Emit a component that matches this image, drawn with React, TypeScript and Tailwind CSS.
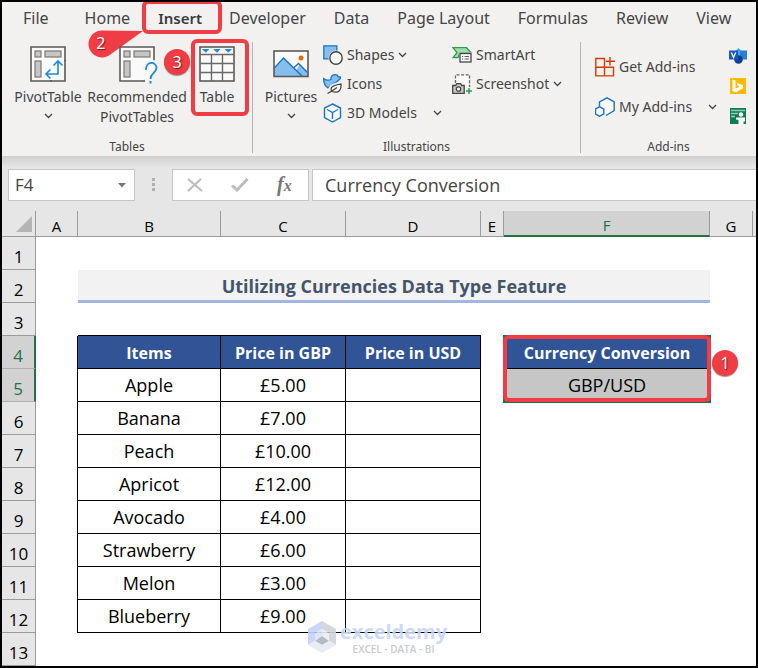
import type { ReactNode } from 'react'
import { clsx } from 'clsx'

const TABS = ['File', 'Home', 'Insert', 'Developer', 'Data', 'Page Layout', 'Formulas', 'Review', 'View']

const COLUMNS = ['A', 'B', 'C', 'D', 'E', 'F', 'G']

const ITEMS = [
  { name: 'Apple', gbp: '£5.00' },
  { name: 'Banana', gbp: '£7.00' },
  { name: 'Peach', gbp: '£10.00' },
  { name: 'Apricot', gbp: '£12.00' },
  { name: 'Avocado', gbp: '£4.00' },
  { name: 'Strawberry', gbp: '£6.00' },
  { name: 'Melon', gbp: '£3.00' },
  { name: 'Blueberry', gbp: '£9.00' },
]

function Chevron() {
  return (
    <svg width="9" height="6" viewBox="0 0 9 6" fill="none" stroke="#444" strokeWidth="1.3" className="shrink-0">
      <path d="M1 1l3.500 3.500L8 1" />
    </svg>
  )
}

function PivotFrame() {
  return (
    <>
      <rect x="1" y="1" width="34" height="34" fill="#fafafa" />
      <path d="M22 35H1V1h34v14" fill="none" stroke="#5c5a58" strokeWidth="1.6" />
      <g fill="#c8c6c4" stroke="#7a7876" strokeWidth="1.2">
        <rect x="5" y="5" width="6" height="6" />
        <rect x="15" y="5" width="16" height="6" />
        <rect x="5" y="15" width="6" height="16" />
      </g>
    </>
  )
}

function PivotTableIcon() {
  return (
    <svg width="36" height="36" viewBox="0 0 36 36">
      <PivotFrame />
      <path d="M20 35h15V14" fill="none" stroke="#5c5a58" strokeWidth="1.6" />
      <path d="M16.500 28H28V15.500M20.500 23.500L16 28l4.500 4.500M23.500 19.500L28 15l4.500 4.500" fill="none" stroke="#1e8bd8" strokeWidth="1.6" />
    </svg>
  )
}

function RecommendedIcon() {
  return (
    <svg width="40" height="38" viewBox="0 0 40 38">
      <PivotFrame />
      <path d="M22 35h4" stroke="#5c5a58" strokeWidth="1.6" />
      <path
        d="M27 24.500c-.3-10.500 11-9 11-2.500 0 5-6.500 5-6.500 16"
        fill="none"
        stroke="#f3f1f0"
        strokeWidth="6"
      />
      <path d="M27 24c-.3-9.500 10.500-8.500 10.500-2.200 0 5-6 5.200-6 11.200" fill="none" stroke="#1e8bd8" strokeWidth="1.8" />
      <rect x="30.500" y="35" width="2" height="2.500" fill="#1e8bd8" />
    </svg>
  )
}

function TableIcon() {
  return (
    <svg width="36" height="36" viewBox="0 0 36 36">
      <rect x="1" y="1" width="34" height="34" fill="#fafafa" stroke="#5c5a58" strokeWidth="1.6" />
      <path d="M1 8.500h34M1 17.500h34M1 26.500h34M12.500 8.500V35M23.500 8.500V35" stroke="#6b6967" strokeWidth="1.4" fill="none" />
      <path d="M3 3h7.500L6.800 6.800zM14.200 3h7.500L18 6.800zM25.500 3H33l-3.700 3.800z" fill="#1e8bd8" />
    </svg>
  )
}

function PicturesIcon() {
  return (
    <svg width="36" height="36" viewBox="0 0 36 36">
      <rect x="1" y="5" width="34" height="25.500" fill="#fafafa" />
      <path d="M1 23.500l10-11 12 12 3.500-5.500 8.500 9v2.500H1z" fill="#83beec" />
      <path d="M1 22.500l9.500-10.500L29 30M20.500 22l5-4.500L35 27" fill="none" stroke="#1a74c4" strokeWidth="1.5" />
      <rect x="1" y="5" width="34" height="25.500" fill="none" stroke="#5c5a58" strokeWidth="1.6" />
      <circle cx="28" cy="12" r="2.500" fill="#e07000" />
    </svg>
  )
}

function ShapesIcon() {
  return (
    <svg width="20" height="20" viewBox="0 0 20 20">
      <path d="M.8 .8h13v13h-13z" fill="#83beec" stroke="#1a74c4" strokeWidth="1.3" />
      <circle cx="13" cy="13" r="7.500" fill="#f3f1f0" />
      <circle cx="13" cy="13" r="6.200" fill="#fafafa" stroke="#444" strokeWidth="1.4" />
    </svg>
  )
}

function IconsIcon() {
  return (
    <svg width="20" height="20" viewBox="0 0 20 20">
      <path
        d="M.7 4.500c2.300 2 5 2 7.300 1C7.500 2 10 .7 12 .7c2 0 3 1 3.300 2l2.200.3c0 2-1 3-2.500 3.500-.5 1.500-2 2.500-4.500 3L5 14C2 12 .5 9 .7 4.500z"
        fill="#83beec"
        stroke="#1a74c4"
        strokeWidth="1.3"
      />
      <path d="M18.500 9.500c.5 6-2 9.500-6.500 9.200-3.500-.2-5.500-2-4.500-4.700 1.200-3.200 6-4 11-4.500z" fill="#fafafa" stroke="#f3f1f0" strokeWidth="3.5" />
      <path
        d="M18 10c.5 5.500-2 8.500-6 8.200-3-.2-4.500-2-3.700-4.200C9.500 11 14 10.500 18 10zM4.500 19.500c3-1.500 6-3.500 9.500-6"
        fill="#fafafa"
        stroke="#444"
        strokeWidth="1.3"
      />
    </svg>
  )
}

function CubeIcon() {
  return (
    <svg width="20" height="20" viewBox="0 0 20 20" fill="none" stroke="#1a74c4" strokeWidth="1.4">
      <path d="M9.500 1l8 4v9.500l-8 4.500-8-4.500V5z" fill="#fafafa" />
      <path d="M4 6.500l5.500 3 5.500-3M9.500 9.500v6.500" />
    </svg>
  )
}

function SmartArtIcon() {
  return (
    <svg width="20" height="20" viewBox="0 0 20 20">
      <path d="M1 2.700h13.500l4.500 5H8l-2 5H1l4-5z" fill="#a3dcae" stroke="#2f9a4b" strokeWidth="1.3" />
      <rect x="7" y="7.500" width="13" height="10.500" fill="#f3f1f0" />
      <rect x="8" y="8.500" width="11" height="8.500" fill="#fafafa" stroke="#444" strokeWidth="1.3" />
      <path d="M10 11.500h1.200M12.500 11.500H17M10 14h1.200M12.500 14H17" stroke="#666" />
    </svg>
  )
}

function ScreenshotIcon() {
  return (
    <svg width="20" height="20" viewBox="0 0 20 20">
      <path d="M3.500 9V.8h14V13" fill="#fafafa" stroke="#666" strokeWidth="1.3" strokeDasharray="3 1.600" />
      <path d="M.7 11.500h3l1-1.800h4l1 1.800h2.500v7.800H.7z" fill="#c8c6c4" stroke="#444" strokeWidth="1.3" />
      <circle cx="6.500" cy="15" r="2.200" fill="#fafafa" stroke="#444" strokeWidth="1.3" />
      <path d="M17 14v6M14 17h6" stroke="#2f9a4b" strokeWidth="1.5" />
    </svg>
  )
}

function GetAddinsIcon() {
  return (
    <svg width="20" height="20" viewBox="0 0 20 20" fill="none" stroke="#d83b01" strokeWidth="1.4">
      <path d="M.8 1.500h8.700v8.700H.8zM.8 10.200h8.700v8.700H.8zM9.500 10.200h9v8.700h-9zM15 0v8.500M10.800 4.200H20" />
    </svg>
  )
}

function MyAddinsIcon() {
  return (
    <svg width="20" height="20" viewBox="0 0 20 20" stroke="#1a74c4" strokeWidth="1.4">
      <path d="M4.500 9.500V4.800L12 .8l7.200 4v8.700L11 18.500" fill="#fafafa" />
      <path d="M4.500 9.700l4.300 2.400v4.800l-4.300 2.400-4-2.400v-4.800z" fill="#fafafa" />
    </svg>
  )
}

function VisioIcon() {
  return (
    <svg width="18" height="16" viewBox="0 0 18 16">
      <path d="M9.500 0L14 4.500 9.500 9 5 4.500z" fill="#41a5ee" />
      <rect x="11" y="2.500" width="7" height="9" fill="#2b7cd3" />
      <circle cx="9.500" cy="11.500" r="4.300" fill="#103f91" />
      <rect x="0" y="2.500" width="9" height="9" fill="#185abd" />
      <path d="M2.300 4.500l2.200 5 2.200-5" fill="none" stroke="#fff" strokeWidth="1.3" />
    </svg>
  )
}

function BingIcon() {
  return (
    <svg width="16" height="16" viewBox="0 0 16 16">
      <rect width="16" height="16" fill="#ffb900" />
      <path d="M2.500 1.500l3 1v8.200l4-2.200-2-1-1-2.700 6.500 2.400v3L5.500 14.500l-3-1.700z" fill="#fff" />
    </svg>
  )
}

function PeopleIcon() {
  return (
    <svg width="16" height="16" viewBox="0 0 16 16">
      <rect width="16" height="16" fill="#107c54" />
      <path d="M1 2.500h14M1 5.500h7M1 8.500h4" stroke="#8fd0b0" strokeWidth="1.3" />
      <circle cx="11" cy="6.500" r="2.200" fill="#fff" />
      <path d="M6 9.500h9v4h-1.500V16h-5v-4L6 11.500z" fill="#fff" />
    </svg>
  )
}

function Badge({ label, className }: { label: string; className?: string }) {
  return (
    <span
      className={clsx(
        'absolute z-10 flex size-[26px] items-center justify-center rounded-full bg-[#f03c44] text-base font-normal text-white shadow-[0_1px_1px_#00000066] [text-shadow:1px_1px_1px_#00000088]',
        className,
      )}
    >
      {label}
    </span>
  )
}

function BigButton({ icon, label, chevron, className, children }: {
  icon: ReactNode
  label: string
  chevron?: boolean
  className?: string
  children?: ReactNode
}) {
  return (
    <button type="button" className={clsx('relative flex flex-col items-center leading-5', className)}>
      <span className="mb-1 flex h-[38px] items-start justify-center pt-px">{icon}</span>
      <span>{label}</span>
      {chevron && (
        <span className="mt-1.5">
          <Chevron />
        </span>
      )}
      {children}
    </button>
  )
}

function SmallButton({ icon, label, chevron, wide }: { icon: ReactNode; label: string; chevron?: boolean; wide?: boolean }) {
  return (
    <button type="button" className="flex h-5 items-center gap-1 whitespace-nowrap leading-5">
      {icon}
      <span>{label}</span>
      {chevron && (
        <span className={wide ? 'ml-3' : ''}>
          <Chevron />
        </span>
      )}
    </button>
  )
}

function Group({ label, className, children }: { label: string; className?: string; children: ReactNode }) {
  return (
    <section className={clsx('flex h-[111px] flex-col justify-between', className)}>
      <div className="flex pt-[3px]">{children}</div>
      <h2 className="text-center text-xs leading-3">{label}</h2>
    </section>
  )
}

function Ribbon() {
  return (
    <header className="bg-[#f3f1f0] font-['Noto_Sans','Open_Sans',sans-serif] text-sm text-[#444]">
      <nav className="flex h-10 gap-7 whitespace-nowrap pl-[21px] pt-1 text-base leading-6">
        {TABS.map((tab) =>
          tab === 'Insert' ? (
            <button key={tab} type="button" className="relative -mr-px h-6 text-[15px] font-semibold text-[#3b3b3b]">
              {tab}
              <span className="absolute -left-4 -right-5 -top-1.5 h-[34px] rounded-md border-4 border-[#f03c44]" />
              <svg className="absolute -left-[71px] top-[23px]" width="57" height="30" viewBox="0 0 57 30">
                <path d="M14 1.500L56 2 22 26.500A13.500 13.500 0 1 1 14 1.500z" fill="#f03c44" />
              </svg>
              <span className="absolute -left-[62px] top-[25px] text-base font-normal text-white [text-shadow:1px_1px_1px_#00000088]">
                2
              </span>
            </button>
          ) : (
            <button key={tab} type="button" className={clsx('h-6', tab === 'File' && 'mr-2')}>
              {tab}
            </button>
          ),
        )}
      </nav>
      <div className="flex pb-[3px]">
        <Group label="Tables" className="w-[251px] shrink-0 border-r border-[#b5b3b1]">
          <BigButton icon={<PivotTableIcon />} label="PivotTable" chevron className="ml-3 w-[68px]" />
          <BigButton icon={<span className="pl-1"><RecommendedIcon /></span>} label="Recommended" className="ml-1 w-[102px]">
            <span>PivotTables</span>
          </BigButton>
          <BigButton icon={<TableIcon />} label="Table" className="ml-2 w-[42px]">
            <span className="absolute -left-[5px] -right-[11px] -top-[6px] h-[77px] rounded-md border-4 border-[#f03c44]" />
            <Badge label="3" className="-left-8 top-1" />
          </BigButton>
        </Group>
        <Group label="Illustrations" className="w-[328px] shrink-0 border-r border-[#b5b3b1]">
          <BigButton icon={<PicturesIcon />} label="Pictures" chevron className="ml-3 w-[52px]" />
          <div className="ml-1.5 flex w-[129px] flex-col items-start gap-[9px]">
            <SmallButton icon={<ShapesIcon />} label="Shapes" chevron />
            <SmallButton icon={<IconsIcon />} label="Icons" />
            <SmallButton icon={<CubeIcon />} label="3D Models" chevron wide />
          </div>
          <div className="flex flex-col items-start gap-[9px]">
            <SmallButton icon={<SmartArtIcon />} label="SmartArt" />
            <SmallButton icon={<ScreenshotIcon />} label="Screenshot" chevron />
          </div>
        </Group>
        <Group label="Add-ins" className="min-w-0 flex-1">
          <div className="ml-3.5 flex w-[134px] flex-col items-start gap-5 pt-3">
            <SmallButton icon={<GetAddinsIcon />} label="Get Add-ins" />
            <SmallButton icon={<MyAddinsIcon />} label="My Add-ins" chevron wide />
          </div>
          <div className="flex flex-col items-center gap-3.5 pt-[3px]">
            <button type="button" aria-label="Visio Data Visualizer"><VisioIcon /></button>
            <button type="button" aria-label="Bing Maps"><BingIcon /></button>
            <button type="button" aria-label="People Graph"><PeopleIcon /></button>
          </div>
        </Group>
      </div>
    </header>
  )
}

function FormulaBar() {
  return (
    <div className="flex h-[55px] items-start bg-linear-to-b from-[#cfcfcf] to-[#e6e6e6] to-20% pl-1.5 pt-[13px] text-lg text-[#444]">
      <div className="flex h-8 w-[127px] items-center border border-[#c6c6c6] bg-white">
        <input aria-label="Name box" defaultValue="F4" className="min-w-0 flex-1 pl-1.5 text-[17px] outline-none" />
        <button type="button" aria-label="Show names" className="px-2">
          <svg width="8" height="5" viewBox="0 0 8 5"><path d="M0 0h8L4 4.500z" fill="#777" /></svg>
        </button>
      </div>
      <svg width="37" height="32" viewBox="0 0 37 32" fill="#b0b0b0">
        <path d="M17 9h3v3h-3zM17 14h3v3h-3zM17 19h3v3h-3z" />
      </svg>
      <div className="flex h-8 w-[137px] items-center border border-[#c6c6c6] bg-white">
        <button type="button" aria-label="Cancel" className="ml-3.5">
          <svg width="16" height="14" viewBox="0 0 16 14" stroke="#bdbdbd" strokeWidth="2.2"><path d="M1 1l14 12M14 1L1 13" /></svg>
        </button>
        <button type="button" aria-label="Enter" className="ml-7">
          <svg width="18" height="14" viewBox="0 0 18 14" fill="none" stroke="#bdbdbd" strokeWidth="3"><path d="M1 7.500l5 4.500L16.500 1" /></svg>
        </button>
        <button type="button" className="ml-7 font-['Liberation_Serif',serif] text-xl font-bold italic leading-6 text-[#777]">
          f<span className="text-base">x</span>
        </button>
      </div>
      <input
        aria-label="Formula bar"
        defaultValue="Currency Conversion"
        className="ml-[3px] h-8 min-w-0 flex-1 border border-r-0 border-[#c6c6c6] bg-white pl-3 outline-none"
      />
    </div>
  )
}

function RowHead({ n }: { n: number }) {
  const selected = n === 4 || n === 5
  return (
    <th
      scope="row"
      className={clsx(
        'h-[33px] border-b p-0 pt-2 text-center text-[17px] font-normal leading-6',
        selected
          ? 'border-r-2 border-b-[#b0b0b0] border-r-[#217346] bg-[#d2d2d2] text-[#217346]'
          : 'border-r border-[#9b9b9b] bg-[#e6e6e6]',
      )}
    >
      {n}
    </th>
  )
}

const HEAD_CELL = 'border-b border-r border-black bg-[#305496] p-0 pt-px text-base font-bold text-white'
const BODY_CELL = 'border-b border-r border-black p-0'

function Sheet() {
  return (
    <table className="w-full table-fixed border-separate border-spacing-0 bg-white text-center text-lg leading-6 text-black">
      <colgroup>
        <col className="w-[34px]" />
        <col className="w-[42px]" />
        <col className="w-[143px]" />
        <col className="w-[125px]" />
        <col className="w-[135px]" />
        <col className="w-[23px]" />
        <col className="w-[206px]" />
        <col className="w-[43px]" />
        <col />
      </colgroup>
      <thead>
        <tr className="bg-[#e6e6e6]">
          <th className="h-6 border-b border-r border-[#9b9b9b] p-0">
            <svg width="30" height="16" viewBox="0 0 30 16"><path d="M30 0v16H14z" fill="#b4b4b4" /></svg>
          </th>
          {COLUMNS.map((c) => (
            <th
              key={c}
              scope="col"
              className={clsx(
                'h-6 border-r border-[#9b9b9b] p-0 pt-1 text-[15px] font-normal leading-5',
                c === 'F' ? 'border-b-2 border-b-[#217346] bg-[#d2d2d2] text-[#217346]' : 'border-b',
              )}
            >
              {c}
            </th>
          ))}
          <th className="border-b border-[#9b9b9b] p-0" />
        </tr>
      </thead>
      <tbody>
        <tr>
          <RowHead n={1} />
          <td colSpan={8} />
        </tr>
        <tr>
          <RowHead n={2} />
          <td />
          <td colSpan={5} className="border-b-[3px] border-[#a0b7e1] bg-[#f2f2f2] p-0 pt-0.5 text-lg font-bold leading-6 text-[#44546a]">
            Utilizing Currencies Data Type Feature
          </td>
          <td colSpan={2} />
        </tr>
        <tr>
          <RowHead n={3} />
          <td />
          <td colSpan={3} className="border-b border-black" />
          <td colSpan={4} />
        </tr>
        <tr>
          <RowHead n={4} />
          <td className="border-r border-black" />
          <th scope="col" className={HEAD_CELL}>Items</th>
          <th scope="col" className={HEAD_CELL}>Price in GBP</th>
          <th scope="col" className={HEAD_CELL}>Price in USD</th>
          <td />
          <th scope="col" className="relative border-b border-black bg-[#305496] p-0 pt-px text-base font-bold text-white">
            Currency Conversion
            <span className="absolute -inset-x-px -top-px h-[68px] border-2 border-[#217346]" />
            <span className="absolute -inset-x-px -top-px h-[67px] rounded-md border-4 border-[#f03c44]" />
            <Badge label="1" className="-right-7 top-3.5" />
          </th>
          <td colSpan={2} />
        </tr>
        {ITEMS.map((item, i) => (
          <tr key={item.name}>
            <RowHead n={i + 5} />
            <td className="border-r border-black" />
            <td className={BODY_CELL}>{item.name}</td>
            <td className={BODY_CELL}>{item.gbp}</td>
            <td className={BODY_CELL} />
            <td />
            {i === 0 ? <td className="border-b border-[#c6c6c6] bg-[#c6c6c6] p-0">GBP/USD</td> : <td />}
            <td colSpan={2} />
          </tr>
        ))}
        <tr>
          <RowHead n={13} />
          <td colSpan={8} />
        </tr>
      </tbody>
    </table>
  )
}

function Watermark() {
  return (
    <div className="absolute bottom-3 left-[306px] flex items-center gap-1 opacity-90">
      <svg width="28" height="32" viewBox="0 0 28 32">
        <path d="M14 0L0 8v16l7-4v-8l7-4z" fill="#c5d3fa" />
        <path d="M14 0l14 8v16l-7-4v-8l-7-4z" fill="#d0d3d8" />
        <path d="M14 8l-7 4v8l7-5z" fill="#dbe4fb" />
        <path d="M14 8l7 4v8l-7-5z" fill="#eceef2" />
        <path d="M14 15l7 5-7 4-7-4z" fill="#aeb3bd" />
        <path d="M0 24l7-4 7 4 7-4 7 4-14 8z" fill="#e6ebf6" />
      </svg>
      <div className="flex flex-col items-center">
        <span className="text-xl font-bold leading-6 text-[#c8d5fb]">exceldemy</span>
        <span className="text-[10px] font-semibold leading-[10px] text-[#c3c6cb]">EXCEL - DATA - BI</span>
      </div>
    </div>
  )
}

export default function App() {
  return (
    <div className="min-h-screen overflow-hidden border-2 border-black bg-white">
      <Ribbon />
      <main className="relative font-['Open_Sans',sans-serif]">
        <FormulaBar />
        <Sheet />
        <Watermark />
      </main>
    </div>
  )
}
